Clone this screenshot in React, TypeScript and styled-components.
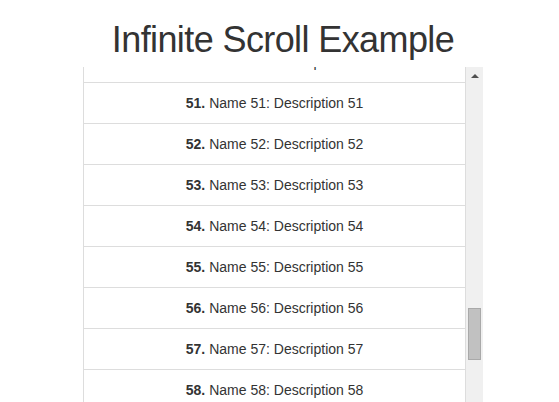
import React, { useLayoutEffect, useRef } from 'react';
import styled, { createGlobalStyle } from 'styled-components';

const ROW_HEIGHT = 41;
const VIEW_HEIGHT = 480;
const ARROW_SIZE = 17;
const SCROLL_TOP = 2034;

const items = Array.from({ length: 100 }, (_, i) => ({
  id: i + 1,
  name: `Name ${i + 1}`,
  description: `Description ${i + 1}`,
}));

const GlobalStyle = createGlobalStyle`
  html, body {
    margin: 0;
    padding: 0;
    overflow: hidden;
    background: #fff;
  }
  body {
    font-family: "Liberation Sans", Arial, Helvetica, sans-serif;
    font-size: 14px;
    line-height: 20px;
    color: #333;
  }
`;

const Page = styled.div`
  width: 400px;
  margin-left: 83px;
`;

const Title = styled.h1`
  margin: 20px 0 7px;
  font-size: 36px;
  font-weight: 400;
  line-height: 40px;
  letter-spacing: -0.6px;
  text-align: center;
  color: #333;
`;

const Frame = styled.div`
  display: flex;
  height: ${VIEW_HEIGHT}px;
`;

const Viewport = styled.div`
  flex: 1;
  overflow: hidden;
`;

const List = styled.ul`
  list-style: none;
  margin: 0;
  padding: 0;
`;

const Row = styled.li`
  box-sizing: border-box;
  height: ${ROW_HEIGHT}px;
  padding: 10px 15px;
  border: 1px solid #ddd;
  border-top: 0;
  text-align: center;
  white-space: nowrap;
`;

const Num = styled.strong`
  font-weight: 700;
  margin-right: 4px;
`;

const Track = styled.div`
  width: 17px;
  display: flex;
  flex-direction: column;
  background: #f0f0f0;
`;

const ArrowButton = styled.div`
  height: ${ARROW_SIZE}px;
  display: flex;
  align-items: center;
  justify-content: center;
  flex-shrink: 0;
`;

const ArrowUp = styled.span`
  width: 0;
  height: 0;
  margin-top: 1px;
  border-left: 4px solid transparent;
  border-right: 4px solid transparent;
  border-bottom: 4px solid #505050;
`;

const Rail = styled.div`
  flex: 1;
  position: relative;
`;

const Thumb = styled.div`
  position: absolute;
  left: 2px;
  right: 2px;
  box-sizing: border-box;
  background: #c1c1c1;
  border: 1px solid #a9a9a9;
`;

export default function App() {
  const viewRef = useRef<HTMLDivElement>(null);

  useLayoutEffect(() => {
    if (viewRef.current) viewRef.current.scrollTop = SCROLL_TOP;
  }, []);

  // thumb geometry follows the list length and the scroll offset
  const contentHeight = items.length * ROW_HEIGHT;
  const railLength = VIEW_HEIGHT - ARROW_SIZE * 2;
  const thumbLength = Math.round((railLength * VIEW_HEIGHT) / contentHeight);
  const thumbTop = Math.round(
    ((railLength - thumbLength) * SCROLL_TOP) / (contentHeight - VIEW_HEIGHT)
  );

  return (
    <>
      <GlobalStyle />
      <Page>
        <Title>Infinite Scroll Example</Title>
        <Frame>
          <Viewport ref={viewRef}>
            <List>
              {items.map((item) => (
                <Row key={item.id}>
                  <Num>{item.id}.</Num>
                  {item.name}: {item.description}
                </Row>
              ))}
            </List>
          </Viewport>
          <Track>
            <ArrowButton>
              <ArrowUp />
            </ArrowButton>
            <Rail>
              <Thumb style={{ top: thumbTop + 3, height: thumbLength }} />
            </Rail>
            <ArrowButton />
          </Track>
        </Frame>
      </Page>
    </>
  );
}
